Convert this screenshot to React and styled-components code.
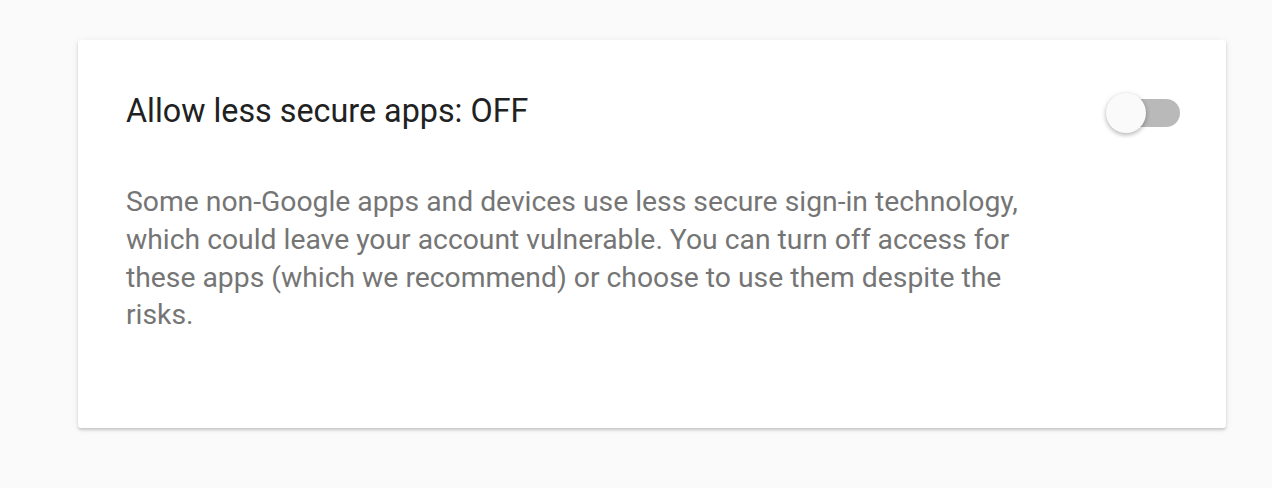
import React, { useState } from 'react';
import styled, { createGlobalStyle } from 'styled-components';

const GlobalStyle = createGlobalStyle`
    html, body {
        margin: 0;
        padding: 0;
        background: #fafafa;
        font-family: Roboto, "Liberation Sans", Arial, sans-serif;
    }
`;

const Page = styled.div`
    padding: 40px 46px 60px 78px;
`;

const Card = styled.section`
    box-sizing: border-box;
    width: 1148px;
    height: 388px;
    background: #fff;
    border-radius: 3px;
    box-shadow: 0 2px 3px rgba(0, 0, 0, 0.18), 0 1px 8px rgba(0, 0, 0, 0.06);
    padding: 52px 46px 0 48px;
`;

const Header = styled.div`
    display: flex;
    align-items: flex-start;
    justify-content: space-between;
`;

const Title = styled.h2`
    margin: 0;
    font-size: 32.3px;
    font-weight: 400;
    line-height: 38px;
    color: #212121;
`;

const Description = styled.p`
    margin: 50px 0 0;
    max-width: 920px;
    font-size: 28.3px;
    line-height: 37.8px;
    color: #757575;
`;

const Toggle = styled.button`
    position: relative;
    width: 74px;
    height: 40px;
    margin-top: 1px;
    padding: 0;
    border: none;
    background: none;
    cursor: pointer;
    outline: none;
`;

const Track = styled.span`
    position: absolute;
    left: 4px;
    right: 0;
    top: 6px;
    height: 28px;
    border-radius: 14px;
    background: ${p => (p.on ? '#a5c8f7' : '#b9b9b9')};
`;

const Thumb = styled.span`
    position: absolute;
    top: 0;
    left: ${p => (p.on ? '34px' : '0')};
    width: 40px;
    height: 40px;
    border-radius: 50%;
    background: ${p => (p.on ? '#4285f4' : '#fafafa')};
    box-shadow: 0 2px 4px rgba(0, 0, 0, 0.22), 0 1px 6px rgba(0, 0, 0, 0.1);
    transition: left 0.15s;
`;

const App = () => {
    const [on, setOn] = useState(false);
    return (
        <Page>
            <GlobalStyle />
            <Card>
                <Header>
                    <Title>Allow less secure apps: {on ? 'ON' : 'OFF'}</Title>
                    <Toggle aria-pressed={on} onClick={() => setOn(!on)}>
                        <Track on={on} />
                        <Thumb on={on} />
                    </Toggle>
                </Header>
                <Description>
                    Some non-Google apps and devices use less secure sign-in technology,
                    which could leave your account vulnerable. You can turn off access for
                    these apps (which we recommend) or choose to use them despite the
                    risks.
                </Description>
            </Card>
        </Page>
    );
};

export default App;
